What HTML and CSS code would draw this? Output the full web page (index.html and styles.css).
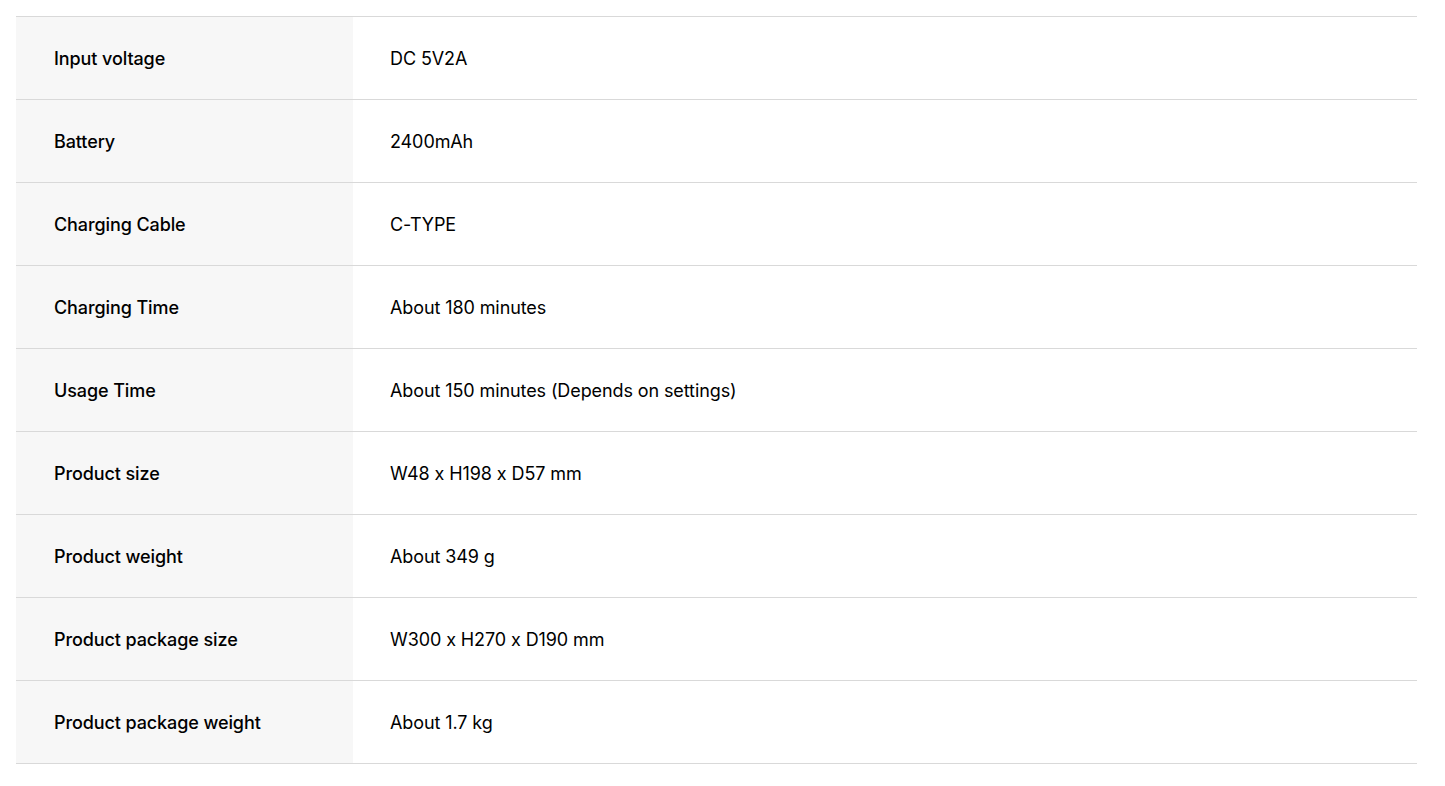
FILE: index.html
```html
<!DOCTYPE html>
<html>
<head>
<meta charset="utf-8">
<link rel="stylesheet" href="styles.css">
</head>
<body>
<div class="wrap">
<table class="spec">
<tbody>
<tr><th>Input voltage</th><td>DC 5V2A</td></tr>
<tr><th>Battery</th><td>2400mAh</td></tr>
<tr><th>Charging Cable</th><td>C-TYPE</td></tr>
<tr><th>Charging Time</th><td>About 180 minutes</td></tr>
<tr><th>Usage Time</th><td>About 150 minutes (Depends on settings)</td></tr>
<tr><th>Product size</th><td>W48 x H198 x D57 mm</td></tr>
<tr><th>Product weight</th><td>About 349 g</td></tr>
<tr><th>Product package size</th><td>W300 x H270 x D190 mm</td></tr>
<tr><th>Product package weight</th><td>About 1.7 kg</td></tr>
</tbody>
</table>
</div>
</body>
</html>
```
FILE: styles.css
```css
html, body {
  margin: 0;
  padding: 0;
  background: #fff;
}
body {
  font-family: Inter, "Noto Sans", sans-serif;
  color: #000;
}
.wrap {
  padding: 16px 28px 0 16px;
}
.spec {
  width: 100%;
  border-collapse: collapse;
  border-top: 1px solid #d9d9d9;
}
.spec tr {
  border-bottom: 1px solid #d9d9d9;
}
.spec th,
.spec td {
  height: 83px;
  padding: 1px 37px 0;
  text-align: left;
  vertical-align: middle;
  font-size: 18px;
  line-height: 22px;
  letter-spacing: -0.1px;
  box-sizing: border-box;
}
.spec th {
  width: 337px;
  padding-left: 38px;
  background: #f7f7f7;
  font-weight: 500;
}
.spec td {
  font-weight: 400;
}
```
